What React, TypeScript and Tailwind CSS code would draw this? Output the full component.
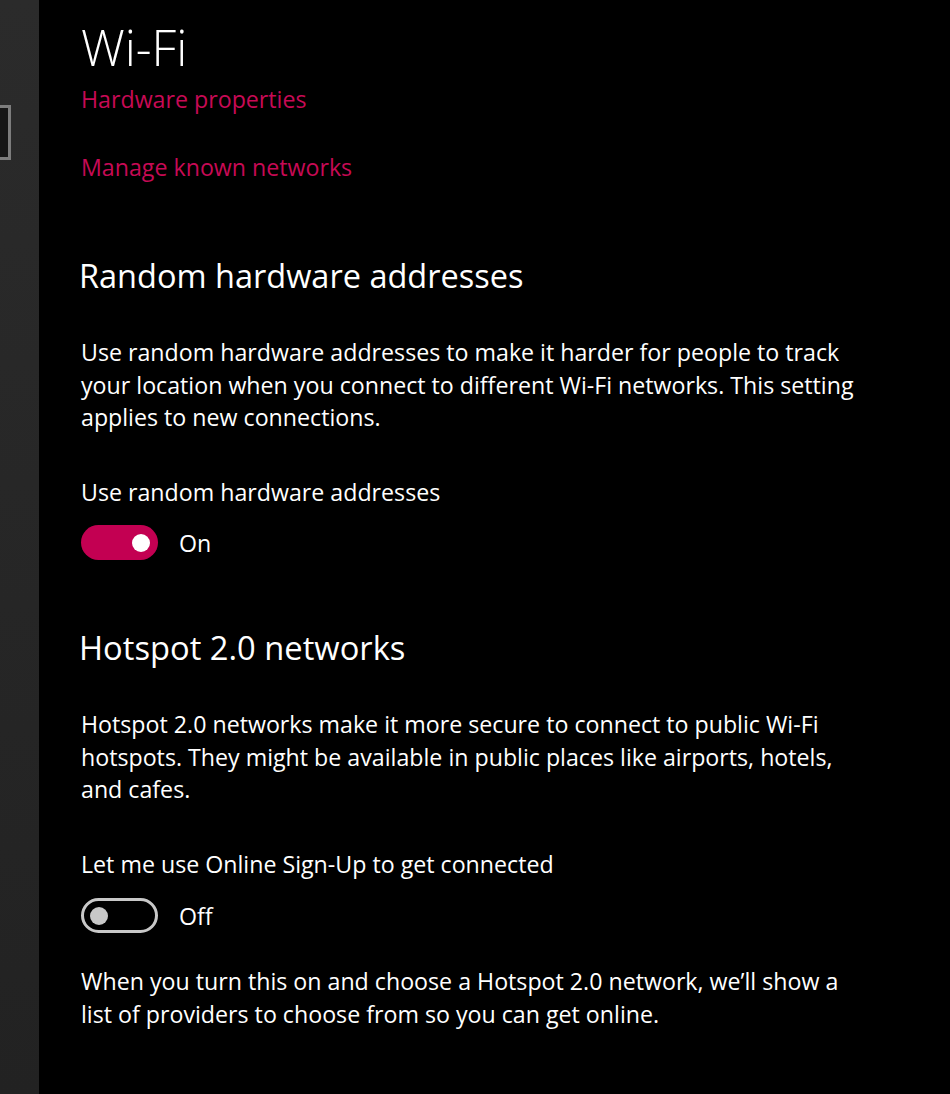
import React from "react";

const font = { fontFamily: '"Open Sans", "Noto Sans", sans-serif' };

function ToggleOn() {
  return (
    <div className="flex h-[35px] w-[77px] items-center justify-end rounded-full bg-[#c30052] pr-[8px]">
      <div className="h-[18px] w-[18px] rounded-full bg-white" />
    </div>
  );
}

function ToggleOff() {
  return (
    <div className="flex h-[35px] w-[77px] items-center rounded-full border-[3.5px] border-[#c8c8c8] pl-[6px]">
      <div className="h-[18px] w-[18px] rounded-full bg-[#c8c8c8]" />
    </div>
  );
}

export default function App() {
  return (
    <div className="flex h-[1094px] w-[950px] overflow-hidden bg-black text-white" style={font}>
      <div className="relative w-[39px] shrink-0 bg-gradient-to-b from-[#2b2b2b] to-[#222222]">
        <div className="absolute left-[-4px] top-[105px] h-[55px] w-[15px] border-[3px] border-[#7d7d7d] bg-[#161616]" />
      </div>
      <div className="flex flex-col pl-[42px] text-[23.2px] leading-[32.5px]">
        <div className="mt-[19px] text-[49px] font-light leading-[56px]">Wi-Fi</div>
        <div className="mt-[8px] text-[#c70a55]">Hardware properties</div>
        <div className="mt-[35.5px] text-[#c70a55]">Manage known networks</div>
        <div className="ml-[-2px] mt-[70.5px] text-[32.5px] leading-[44px]">Random hardware addresses</div>
        <div className="mt-[38px]">
          Use random hardware addresses to make it harder for people to track
          <br />
          your location when you connect to different Wi-Fi networks. This setting
          <br />
          applies to new connections.
        </div>
        <div className="mt-[42.5px]">Use random hardware addresses</div>
        <div className="mt-[16.5px] flex items-center gap-[21px]">
          <ToggleOn />
          <span className="relative top-[1px]">On</span>
        </div>
        <div className="ml-[-2px] mt-[66px] text-[32.7px] leading-[44px]">Hotspot 2.0 networks</div>
        <div className="mt-[38px]">
          Hotspot 2.0 networks make it more secure to connect to public Wi-Fi
          <br />
          hotspots. They might be available in public places like airports, hotels,
          <br />
          and cafes.
        </div>
        <div className="mt-[42.5px]">Let me use Online Sign-Up to get connected</div>
        <div className="mt-[17.5px] flex items-center gap-[21px]">
          <ToggleOff />
          <span className="relative top-[1px]">Off</span>
        </div>
        <div className="mt-[32px]">
          When you turn this on and choose a Hotspot 2.0 network, we’ll show a
          <br />
          list of providers to choose from so you can get online.
        </div>
      </div>
    </div>
  );
}
